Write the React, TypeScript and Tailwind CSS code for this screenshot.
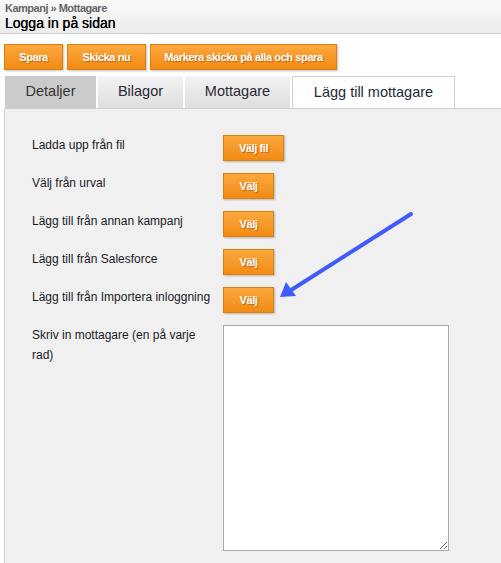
const rows = [
  { label: "Ladda upp från fil", button: "Välj fil", wide: true },
  { label: "Välj från urval", button: "Välj" },
  { label: "Lägg till från annan kampanj", button: "Välj" },
  { label: "Lägg till från Salesforce", button: "Välj" },
  { label: "Lägg till från Importera inloggning", button: "Välj" },
];

function OrangeButton({ children, className = "" }: { children: string; className?: string }) {
  return (
    <button
      className={`h-[26px] border border-[#d9800f] bg-gradient-to-b from-[#fca83c] to-[#f28b10] text-[11px] font-bold tracking-[-0.4px] text-white [text-shadow:1px_1px_1px_rgba(140,70,0,0.6)] shadow-[1px_1px_2px_rgba(0,0,0,0.25)] ${className}`}
    >
      {children}
    </button>
  );
}

export default function App() {
  return (
    <div className="relative h-[563px] w-[501px] overflow-hidden bg-white font-['Liberation_Sans',Arial,sans-serif]">
      <div className="h-[34px] border-b border-[#d0d0d0] bg-gradient-to-b from-[#fafafa] to-[#ebebeb] px-[5px] pt-[2px]">
        <div className="text-[11px] font-bold leading-[13px] tracking-[-0.5px] text-[#666]">Kampanj » Mottagare</div>
        <div className="text-[14px] leading-[17px] text-black [text-shadow:0_0_0.4px_#000]">Logga in på sidan</div>
      </div>

      <div className="flex gap-[4px] pl-[4px] pt-[10px]">
        <OrangeButton className="w-[59px]">Spara</OrangeButton>
        <OrangeButton className="w-[79px]">Skicka nu</OrangeButton>
        <OrangeButton className="w-[187px]">Markera skicka på alla och spara</OrangeButton>
      </div>

      <div className="mt-[6px] flex h-[32px] gap-[2px] pl-[5px] text-[14.5px]">
        <div className="flex w-[91px] items-center justify-center bg-[#cbcbcb] text-[#333]">Detaljer</div>
        <div className="flex w-[85px] items-center justify-center bg-gradient-to-b from-[#f3f3f3] to-[#dedede] text-[#2a2a35]">Bilagor</div>
        <div className="flex w-[105px] items-center justify-center bg-gradient-to-b from-[#f3f3f3] to-[#dedede] text-[#2a2a35]">Mottagare</div>
        <div className="flex w-[163px] items-center justify-center border border-b-0 border-[#cfcfcf] bg-white text-[#222a3a]">Lägg till mottagare</div>
      </div>

      <div className="ml-[4px] h-full border-l border-t border-[#cfcfcf] bg-[#f0f0f0] pl-[27px] pt-[26px] text-[12px] text-[#1a1a26]">
        <div className="flex flex-col gap-[12px]">
          {rows.map((row, idx) => (
            <div key={idx} className="flex items-start">
              <div className="mr-[8px] w-[183px] leading-[20px]">{row.label}</div>
              <OrangeButton className={row.wide ? "w-[61px]" : "w-[51px]"}>{row.button}</OrangeButton>
            </div>
          ))}
          <div className="flex items-start">
            <div className="mr-[8px] w-[183px] leading-[20px]">Skriv in mottagare (en på varje rad)</div>
            <textarea className="h-[226px] w-[226px] border border-[#a9a9a9] bg-white" />
          </div>
        </div>
      </div>

      <svg className="absolute left-0 top-0" width="501" height="563">
        <line x1="411" y1="214" x2="288" y2="292" stroke="#3f5cfb" strokeWidth="4" strokeLinecap="round" />
        <polygon points="280,297 286,282 296,296" fill="#3f5cfb" />
      </svg>
    </div>
  );
}
